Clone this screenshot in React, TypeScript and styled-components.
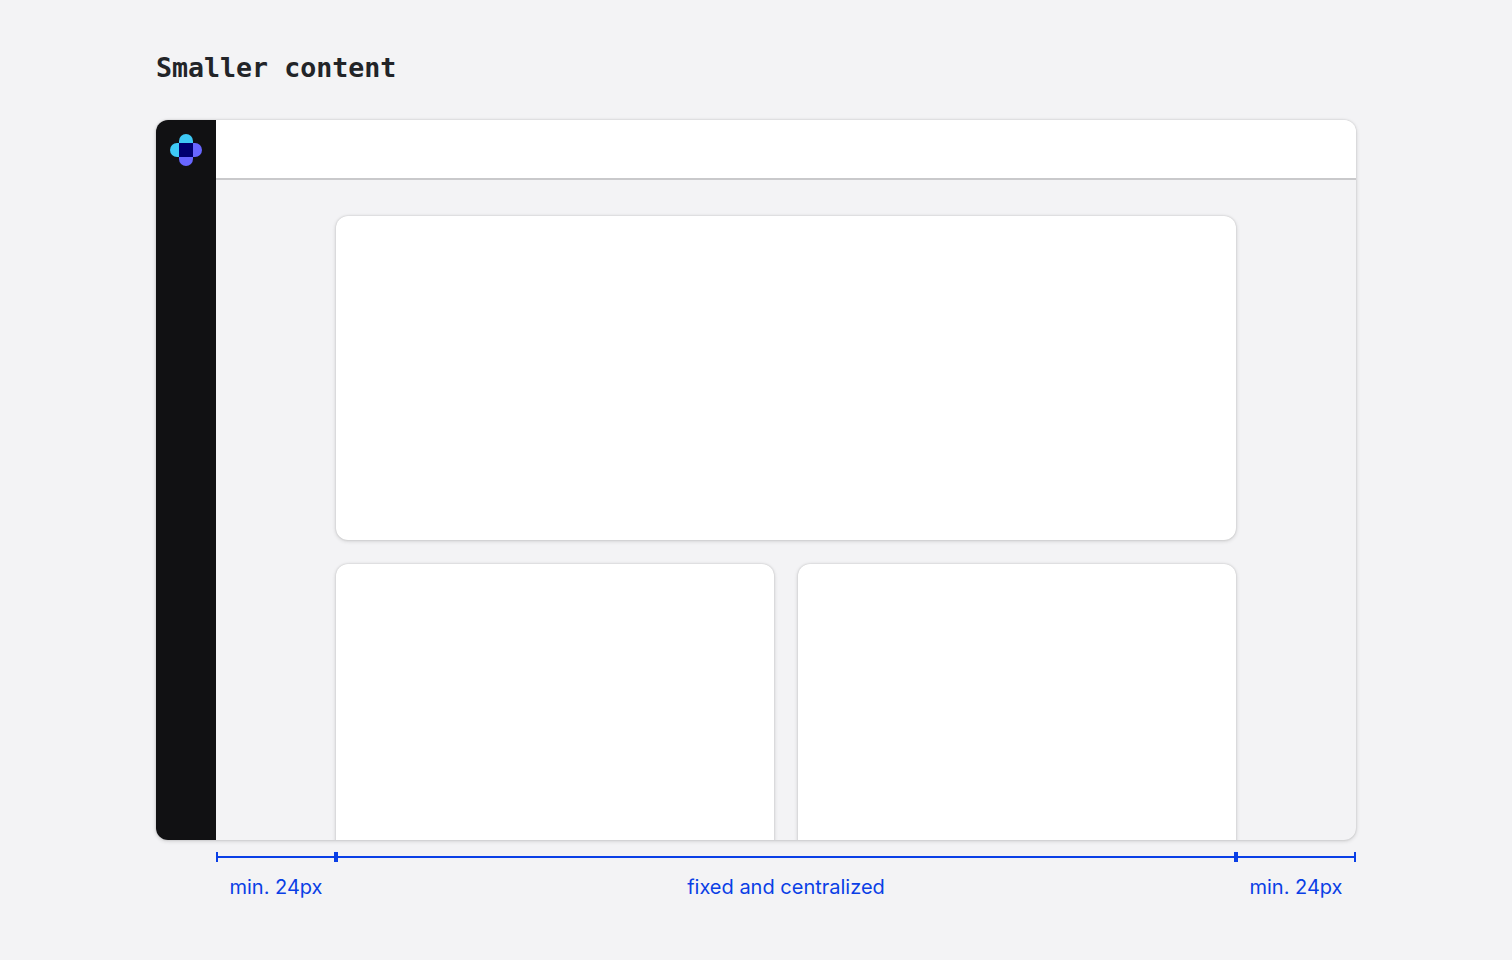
import React from "react";
import styled, { createGlobalStyle } from "styled-components";

const Global = createGlobalStyle`
  html, body { margin: 0; padding: 0; background: #f3f3f5; }
  #root { width: 1512px; height: 960px; overflow: hidden; }
`;

const Page = styled.main`
  width: 1512px;
  height: 960px;
  box-sizing: border-box;
  padding: 48px 156px 0;
  display: flex;
  flex-direction: column;
  background: #f3f3f5;
`;

const Title = styled.h1`
  margin: 0 0 48px;
  height: 24px;
  line-height: 39px;
  font-family: "DejaVu Sans Mono", "Liberation Mono", monospace;
  font-size: 26.62px;
  font-weight: 700;
  color: #222428;
  white-space: nowrap;
`;

const Frame = styled.section`
  height: 720px;
  display: flex;
  flex-shrink: 0;
  border-radius: 12px;
  overflow: hidden;
  background: #f3f3f5;
  box-shadow: 0 0 2px rgba(0, 0, 0, 0.16), 0 1px 4px rgba(0, 0, 0, 0.16);
`;

const Sidebar = styled.aside`
  width: 60px;
  flex-shrink: 0;
  background: #111113;
  display: flex;
  justify-content: center;
  padding-top: 14px;
  box-sizing: border-box;
`;

const LogoSlot = styled.div`
  height: 32px;
`;

const Main = styled.div`
  flex: 1;
  min-width: 0;
  display: flex;
  flex-direction: column;
`;

const Header = styled.header`
  height: 60px;
  flex-shrink: 0;
  box-sizing: border-box;
  background: #fff;
  border-bottom: 2px solid #c9c9cb;
`;

const Content = styled.div`
  flex: 1;
  min-height: 0;
  width: 900px;
  margin: 0 auto;
  padding-top: 36px;
  display: grid;
  grid-template-columns: 1fr 1fr;
  grid-template-rows: 324px 324px;
  gap: 24px;
`;

const Card = styled.div<{ $wide?: boolean }>`
  grid-column: ${(p) => (p.$wide ? "1 / -1" : "auto")};
  background: #fff;
  border-radius: 12px;
  box-shadow: 0 0 2px rgba(0, 0, 0, 0.16), 0 1px 4px rgba(0, 0, 0, 0.16);
`;

const Ruler = styled.div`
  margin: 10px 0 0 60px;
  height: 14px;
  display: flex;
  align-items: center;
`;

const Tick = styled.span<{ $thick?: boolean }>`
  width: ${(p) => (p.$thick ? 4 : 2)}px;
  height: 10px;
  flex-shrink: 0;
  background: #0a3fe6;
`;

const Line = styled.span<{ $w: number }>`
  width: ${(p) => p.$w}px;
  height: 2px;
  flex-shrink: 0;
  background: #0a3fe6;
`;

const Labels = styled.div`
  margin: 11px 0 0 60px;
  display: grid;
  grid-template-columns: 120px 900px 120px;
`;

const Label = styled.span`
  font-family: Inter, "Liberation Sans", sans-serif;
  font-size: 20px;
  line-height: 24px;
  color: #0a3fe6;
  text-align: center;
  white-space: nowrap;
`;

function Logo() {
  return (
    <svg width="32" height="32" viewBox="0 0 32 32" aria-label="logo">
      <path d="M9 9V7a7 7 0 0 1 14 0v2z" fill="#3ec9f5" />
      <path d="M9 9H7a7 7 0 0 0 0 14h2z" fill="#3ec9f5" />
      <path d="M23 9h2a7 7 0 0 1 0 14h-2z" fill="#6866ff" />
      <path d="M9 23h14v2a7 7 0 0 1-14 0z" fill="#6866ff" />
      <rect x="9" y="9" width="14" height="14" fill="#00006e" />
    </svg>
  );
}

export default function App() {
  return (
    <Page>
      <Global />
      <Title>Smaller content</Title>
      <Frame>
        <Sidebar>
          <LogoSlot>
            <Logo />
          </LogoSlot>
        </Sidebar>
        <Main>
          <Header />
          <Content>
            <Card $wide />
            <Card />
            <Card />
          </Content>
        </Main>
      </Frame>
      <Ruler>
        <Tick />
        <Line $w={116} />
        <Tick $thick />
        <Line $w={896} />
        <Tick $thick />
        <Line $w={116} />
        <Tick />
      </Ruler>
      <Labels>
        <Label>min. 24px</Label>
        <Label>fixed and centralized</Label>
        <Label>min. 24px</Label>
      </Labels>
    </Page>
  );
}
